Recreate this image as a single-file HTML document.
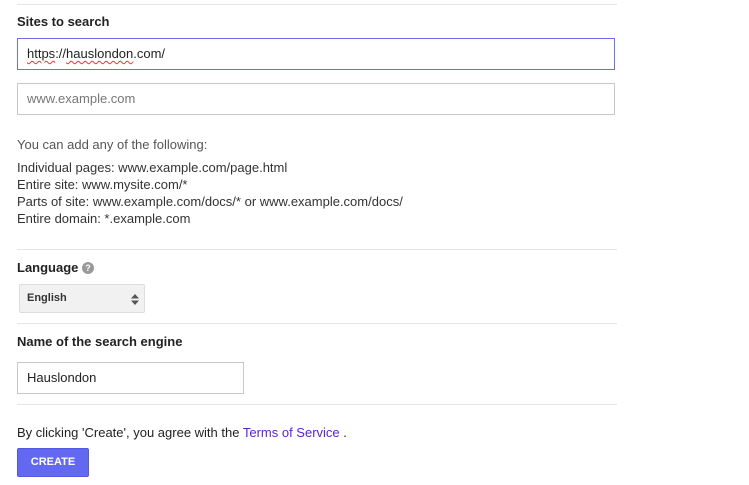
<!DOCTYPE html>
<html><head><style>
body{margin:0;background:#fff;font-family:"Liberation Sans",Arial,sans-serif;font-size:13px;color:#222;position:relative;width:749px;height:485px;overflow:hidden}
.a{position:absolute}
.hr{position:absolute;left:17px;width:600px;height:1px;background:#e5e5e5}
.h{font-weight:bold;font-size:13px;color:#222}
.in{position:absolute;left:17px;box-sizing:border-box;border:1px solid #c8c8c8;height:32px;padding-left:9px;line-height:30px;font-size:13px}
</style></head><body>
<div class="hr" style="top:4px"></div>
<div class="a h" style="left:17px;top:14px">Sites to search</div>
<div class="in" style="top:38px;width:598px;border-color:#6b6ff0;color:#222"><span style="text-decoration:underline wavy #e33;text-decoration-thickness:1px;text-underline-offset:2px">https</span>://<span style="text-decoration:underline wavy #e33;text-decoration-thickness:1px;text-underline-offset:2px">hauslondon</span>.com/</div>
<div class="in" style="top:83px;width:598px;color:#777">www.example.com</div>
<div class="a" style="left:17px;top:137px;color:#555">You can add any of the following:</div>
<div class="a" style="left:17px;top:159px;line-height:17px;color:#333">Individual pages: www.example.com/page.html<br>Entire site: www.mysite.com/*<br>Parts of site: www.example.com/docs/* or www.example.com/docs/<br>Entire domain: *.example.com</div>
<div class="hr" style="top:249px"></div>
<div class="a h" style="left:17px;top:260px">Language <span style="display:inline-block;width:12px;height:12px;border-radius:50%;background:#999;color:#fff;font-size:9px;line-height:12px;text-align:center;vertical-align:1px">?</span></div>
<div class="a" style="left:19px;top:284px;width:126px;height:29px;box-sizing:border-box;border:1px solid #ddd;border-radius:2px;background:#f1f1f1;font-weight:bold;font-size:11px;line-height:27px;padding-left:7px;color:#333">English
<svg class="a" style="right:5px;top:9px" width="8" height="11"><path d="M0 4.5L4 0L8 4.5Z M0 6.5L4 11L8 6.5Z" fill="#555"/></svg></div>
<div class="hr" style="top:323px"></div>
<div class="a h" style="left:17px;top:334px">Name of the search engine</div>
<div class="in" style="top:362px;width:227px;color:#222">Hauslondon</div>
<div class="hr" style="top:404px"></div>
<div class="a" style="left:17px;top:425px;color:#222">By clicking 'Create', you agree with the <span style="color:#5a23d6">Terms of Service</span> .</div>
<div class="a" style="left:17px;top:448px;width:72px;height:29px;background:#6368f0;border:1px solid #5558dd;box-sizing:border-box;border-radius:2px;color:#fff;font-weight:bold;font-size:11px;text-align:center;line-height:27px">CREATE</div>
</body></html>
